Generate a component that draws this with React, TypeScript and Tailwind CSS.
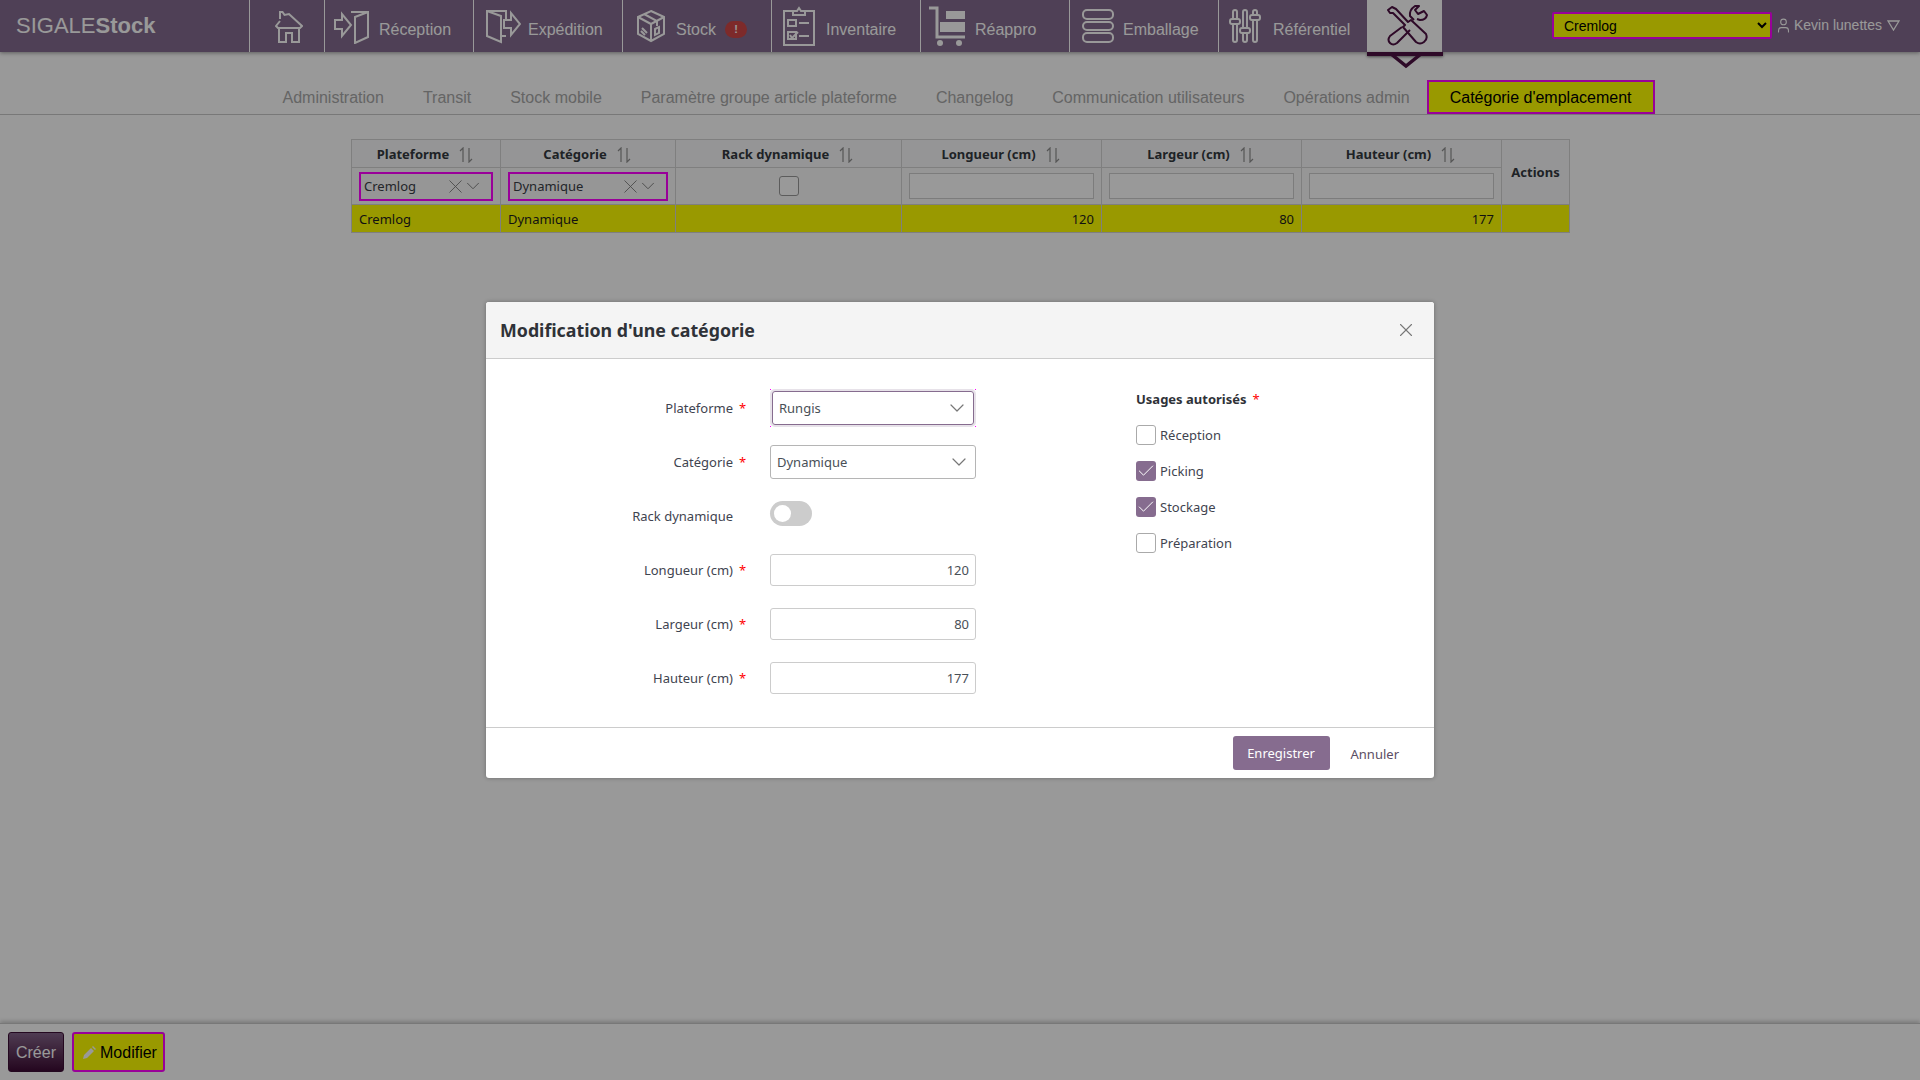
import React from 'react';
import { ChevronDown, X, User, Check } from 'lucide-react';

const uiFont = "[font-family:'Noto_Sans',sans-serif]";

const HomeIcon = () => (
  <svg width="28" height="32" viewBox="0 0 28 32" fill="none" stroke="currentColor" strokeWidth="2">
    <path d="M5 8V1h2.5l2 3L14 3l13 12-2 2H3l-2-2 4-5" />
    <path d="M4 17v14h7V22h6v9h7V17" />
  </svg>
);

const ReceptionIcon = () => (
  <svg width="36" height="36" viewBox="0 0 36 36" fill="none" stroke="currentColor" strokeWidth="2">
    <path d="M1 12h7V6l9 11-9 11v-7H1z" />
    <path d="M17 4h17v25l-13 6V9l13-5" />
  </svg>
);

const ExpeditionIcon = () => (
  <svg width="36" height="36" viewBox="0 0 36 36" fill="none" stroke="currentColor" strokeWidth="2">
    <path d="M21 11V3H2v25l14 6V8L2 3" />
    <path d="M16 28h5" />
    <path d="M19 12h7V5l9 11-9 11v-7h-7z" />
  </svg>
);

const StockIcon = () => (
  <svg width="30" height="34" viewBox="0 0 30 34" fill="none" stroke="currentColor" strokeWidth="2">
    <path d="M15 2l13 6v17l-13 7-13-7V8z" />
    <path d="M2 8l13 7 13-7M15 15v17M8 5l13 7v5" />
    <path d="M6 19l5 5M5 22l4 4" />
    <path d="M19 20l4-2v6l-4 2z" />
  </svg>
);

const InventaireIcon = () => (
  <svg width="32" height="40" viewBox="0 0 32 40" fill="none" stroke="currentColor" strokeWidth="2">
    <path d="M10 5H1v34h30V5h-9" />
    <path d="M10 9V5h4l2-3 2 3h4v4z" />
    <path d="M5 14h8v6H5zM16 17h10M5 26h8v7H5zM16 30h10" />
    <path d="M7 29l2 3 6-6" />
  </svg>
);

const ReapproIcon = () => (
  <svg width="42" height="44" viewBox="0 0 42 44" fill="none">
    <path d="M0 4h8v29h28" stroke="currentColor" strokeWidth="3" />
    <rect x="17" y="7" width="19" height="8" fill="currentColor" />
    <rect x="11" y="18" width="25" height="10" fill="currentColor" />
    <circle cx="11" cy="39" r="3" fill="currentColor" />
    <circle cx="30" cy="39" r="3" fill="currentColor" />
  </svg>
);

const EmballageIcon = () => (
  <svg width="32" height="34" viewBox="0 0 32 34" fill="none" stroke="currentColor" strokeWidth="2">
    <rect x="1" y="1" width="30" height="9" rx="4" />
    <rect x="1" y="13" width="30" height="8" rx="4" />
    <rect x="1" y="24" width="30" height="9" rx="4" />
  </svg>
);

const ReferentielIcon = () => (
  <svg width="32" height="34" viewBox="0 0 32 34" fill="none" stroke="currentColor" strokeWidth="2">
    <path d="M6 1a2 2 0 0 1 2 2v7H4V3a2 2 0 0 1 2-2zM4 15v16a2 2 0 0 0 4 0V15" />
    <rect x="1" y="10" width="10" height="5" rx="2" />
    <path d="M16 1a2 2 0 0 1 2 2v16h-4V3a2 2 0 0 1 2-2zM14 24v7a2 2 0 0 0 4 0v-7" />
    <rect x="11" y="19" width="10" height="5" rx="2" />
    <path d="M26 1a2 2 0 0 1 2 2v3h-4V3a2 2 0 0 1 2-2zM24 11v20a2 2 0 0 0 4 0V11" />
    <rect x="21" y="6" width="10" height="5" rx="2" />
  </svg>
);

const ToolsIcon = () => (
  <svg width="42" height="42" viewBox="0 0 42 42" fill="none" stroke="#4d1143" strokeWidth="2" strokeLinejoin="round">
    <path d="M1 5l4-3 4 2 12 13 3-2 15 14q2 5-2 8-4 3-8 0L16 22l2-2L6 8H3z" />
    <path d="M15 22L3 31q-3 4 0 7 3 3 7 0l13-13" />
    <path d="M27 15l-4-4q-1-6 5-10h4l-4 4 3 4 6-3 3 4q-1 5-7 5l-3-1" />
  </svg>
);

const SortIcon = () => (
  <svg width="14" height="16" viewBox="0 0 14 16" fill="none" stroke="#8f8f8f" strokeWidth="1.2">
    <path d="M4 15V1L1 4M10 1v14l3-3" />
  </svg>
);

type NavItem = { label: string; icon: React.ReactNode; box: string };

const navItems: NavItem[] = [
  { label: 'Réception', icon: <ReceptionIcon />, box: 'pl-[9px] gap-[9px]' },
  { label: 'Expédition', icon: <ExpeditionIcon />, box: 'pl-[11px] gap-[7px]' },
  { label: 'Stock', icon: <StockIcon />, box: 'pl-[13px] gap-[10px]' },
  { label: 'Inventaire', icon: <InventaireIcon />, box: 'pl-[11px] gap-[11px]' },
  { label: 'Réappro', icon: <ReapproIcon />, box: 'pl-[8px] gap-[4px]' },
  { label: 'Emballage', icon: <EmballageIcon />, box: 'pl-[12px] gap-[9px]' },
  { label: 'Référentiel', icon: <ReferentielIcon />, box: 'pl-[10px] gap-[12px]' },
];

const tabs = [
  'Administration',
  'Transit',
  'Stock mobile',
  'Paramètre groupe article plateforme',
  'Changelog',
  'Communication utilisateurs',
  'Opérations admin',
];

const TopBar = () => (
  <header className="relative z-10 flex h-[52px] shrink-0 bg-[#846c8f] text-white shadow-[0_1px_4px_rgba(0,0,0,0.4)]">
    <div className="flex w-[249px] items-center pb-[1px] pl-4 text-[22px] leading-none">
      SIGALE<b>Stock</b>
    </div>
    <a className="flex w-[75px] items-center justify-center border-l border-white pt-[1px] pl-[3px]">
      <HomeIcon />
    </a>
    {navItems.map((item) => (
      <a key={item.label} className={`flex w-[149px] items-center border-l border-white text-base ${item.box}`}>
        {item.icon}
        <span className="pt-[7px]">{item.label}</span>
        {item.label === 'Stock' && (
          <span className="mt-[7px] -ml-[1px] flex h-[17px] w-[22px] items-center justify-center rounded-full bg-[#d04646] text-[11px] font-bold">
            !
          </span>
        )}
      </a>
    ))}
    <a className="relative flex w-[75px] items-center justify-center border-l border-white bg-white pl-[5px]">
      <ToolsIcon />
      <span className="absolute top-[52px] -left-[1px] h-[4px] w-[76px] bg-[#4d1143] shadow-[0_1px_3px_rgba(0,0,0,0.5)]" />
      <svg className="absolute top-[54px] left-[21px]" width="34" height="15" viewBox="0 0 34 15" fill="none" stroke="#4d1143" strokeWidth="3.5">
        <path d="M2 0l15 12L32 0" />
      </svg>
    </a>
    <div className="ml-[110px] flex items-center self-start pt-3">
      <select className="h-[27px] w-[220px] rounded-[2px] border-2 border-[#ff00ff] bg-[#ffff00] pl-[6px] text-sm text-black">
        <option>Cremlog</option>
      </select>
      <User className="ml-[3px]" size={17} strokeWidth={1.5} />
      <span className="ml-[2px] pb-[1px] text-sm">Kevin lunettes</span>
      <svg className="ml-[5px]" width="13" height="11" viewBox="0 0 13 11" fill="none" stroke="currentColor" strokeWidth="1.3">
        <path d="M1 1h11L6.5 10z" />
      </svg>
    </div>
  </header>
);

const Tabs = () => (
  <nav className="flex h-[63px] shrink-0 items-end border-b border-[#c8c8c8] pl-[263px] text-base">
    {tabs.map((tab) => (
      <a key={tab} className="flex h-[34px] items-center border-2 border-transparent px-[17.5px] pt-[1px] text-[#a8a8a8]">
        {tab}
      </a>
    ))}
    <a className="-ml-[2.5px] flex h-[34px] items-center border-2 border-[#ff00ff] bg-[#ffff00] px-[21px] pt-[1px] text-black">
      Catégorie d'emplacement
    </a>
  </nav>
);

const FilterSelect = ({ value, width }: { value: string; width: string }) => (
  <div className={`flex h-[29px] items-center justify-between border-2 border-[#ff00ff] pr-[7px] pl-[3px] text-[13px] text-[#3b4047] ${width}`}>
    <span className="pt-[1px]">{value}</span>
    <span className="flex items-center -space-x-[5px] text-[#7a7a7a]">
      <X size={23} strokeWidth={0.9} />
      <ChevronDown size={22} strokeWidth={1} />
    </span>
  </div>
);

const columns = [
  { label: 'Plateforme', width: 'w-[149px]' },
  { label: 'Catégorie', width: 'w-[175px]' },
  { label: 'Rack dynamique', width: 'w-[226px]' },
  { label: 'Longueur (cm)', width: 'w-[200px]' },
  { label: 'Largeur (cm)', width: 'w-[200px]' },
  { label: 'Hauteur (cm)', width: 'w-[200px]' },
];

const CategoryTable = () => (
  <div className={`mt-[24px] ml-[351px] w-[1218px] text-[13px] text-[#343a40] ${uiFont}`}>
    <table className="w-full table-fixed border-collapse">
      <thead>
        <tr className="h-[28px] bg-[#f8f9fa]">
          {columns.map((col) => (
            <th key={col.label} className={`border border-[#d4d4d4] p-0 pt-[2px] pr-[2px] font-bold ${col.width}`}>
              <span className="inline-flex items-center gap-[10px]">
                {col.label}
                <SortIcon />
              </span>
            </th>
          ))}
          <th rowSpan={2} className="w-[68px] border border-[#d4d4d4] bg-[#f8f9fa] p-0 pt-[1px] font-bold">
            Actions
          </th>
        </tr>
        <tr className="h-[37px] bg-[#fafafa]">
          <td className="border border-[#d4d4d4] px-[7px]">
            <FilterSelect value="Cremlog" width="w-[134px]" />
          </td>
          <td className="border border-[#d4d4d4] px-[7px]">
            <FilterSelect value="Dynamique" width="w-[160px]" />
          </td>
          <td className="border border-[#d4d4d4]">
            <div className="mx-auto h-5 w-5 rounded-[3px] border border-[#9a9a9a] bg-white" />
          </td>
          {[0, 1, 2].map((i) => (
            <td key={i} className="border border-[#d4d4d4] px-[7px]">
              <div className="h-[26px] w-full border border-[#cfcfcf] bg-white" />
            </td>
          ))}
        </tr>
      </thead>
      <tbody>
        <tr className="h-[28px] bg-[#ffff00] text-[#1d1d1d]">
          <td className="border border-[#d4d4d4] px-[7px] pt-[2px] pb-0">Cremlog</td>
          <td className="border border-[#d4d4d4] px-[7px] pt-[2px] pb-0">Dynamique</td>
          <td className="border border-[#d4d4d4]" />
          <td className="border border-[#d4d4d4] px-[7px] pt-[2px] pb-0 text-right">120</td>
          <td className="border border-[#d4d4d4] px-[7px] pt-[2px] pb-0 text-right">80</td>
          <td className="border border-[#d4d4d4] px-[7px] pt-[2px] pb-0 text-right">177</td>
          <td className="border border-[#d4d4d4]" />
        </tr>
      </tbody>
    </table>
  </div>
);

const BottomBar = () => (
  <footer className="mt-auto flex h-[57px] shrink-0 items-center gap-2 border-t border-[#c8c8c8] pl-2 shadow-[0_-2px_4px_rgba(0,0,0,0.2)]">
    <button className="h-10 w-[56px] rounded-[3px] border border-[#3d0e36] bg-gradient-to-b from-[#84648a] to-[#3d0a35] pt-[1px] text-base text-white">
      Créer
    </button>
    <button className="flex h-10 w-[93px] items-center gap-[4px] rounded-[3px] border-2 border-[#ff00ff] bg-[#ffff00] pt-[1px] pl-[9px] text-base text-black">
      <svg width="13" height="13" viewBox="0 0 13 13" fill="#fff">
        <path d="M0 13l1-4 7-7 3 3-7 7zM9 1l1-1 3 3-1 1z" />
      </svg>
      Modifier
    </button>
  </footer>
);

const FormRow = ({ label, required, children }: { label: string; required?: boolean; children: React.ReactNode }) => (
  <div className="flex h-[34px] items-center">
    <div className="w-[247px] pt-[1px] text-right">
      <label className="relative inline-block">
        {label}
        {required && <span className="absolute top-0 left-[calc(100%+6px)] text-[#ff0000]">*</span>}
      </label>
    </div>
    <div className="ml-[37px] flex w-[206px] items-center">{children}</div>
  </div>
);

const NumberInput = ({ value }: { value: string }) => (
  <div className="flex h-8 w-full items-center justify-end rounded-[3px] border border-[#cccccc] pt-[1px] pr-[6px] text-[#495057]">{value}</div>
);

const usages = [
  { label: 'Réception', checked: false },
  { label: 'Picking', checked: true },
  { label: 'Stockage', checked: true },
  { label: 'Préparation', checked: false },
];

const Modal = () => (
  <div className="absolute inset-0 z-20 bg-black/40">
    <div className={`mx-auto mt-[302px] w-[948px] rounded-[3px] bg-white text-[13px] text-[#3f4450] shadow-[0_0_4px_rgba(0,0,0,0.3)] ${uiFont}`}>
      <div className="flex h-[57px] items-center justify-between rounded-t-[3px] border-b border-[#cccccc] bg-[#f4f4f4] pr-[17px] pl-[14px]">
        <h2 className="text-[17.8px] font-bold text-[#2f3238]">Modification d'une catégorie</h2>
        <X size={22} strokeWidth={1.2} className="text-[#777777]" />
      </div>
      <div className="flex h-[368px]">
        <div className="flex flex-col gap-5 pt-[32px]">
          <FormRow label="Plateforme" required>
            <div className="relative mx-[2px] flex h-[34px] w-[202px] items-center justify-between rounded-[3px] border border-[#866c8f] pr-[4px] pl-[6px] text-[#495057] shadow-[0_0_0_2px_#e7e2e9]">
              <span className="pt-[1px]">Rungis</span>
              <ChevronDown size={24} strokeWidth={1.2} className="text-[#777777]" />
              <span className="absolute -top-[3px] -left-[3px] h-px w-px bg-[#ff00ff]" />
              <span className="absolute -top-[3px] -right-[3px] h-px w-px bg-[#ff00ff]" />
              <span className="absolute -bottom-[3px] -left-[3px] h-px w-px bg-[#ff00ff]" />
              <span className="absolute -right-[3px] -bottom-[3px] h-px w-px bg-[#ff00ff]" />
            </div>
          </FormRow>
          <FormRow label="Catégorie" required>
            <div className="flex h-[34px] w-full items-center justify-between rounded-[3px] border border-[#b5b5b5] pr-[4px] pl-[6px] text-[#495057]">
              <span className="pt-[1px]">Dynamique</span>
              <ChevronDown size={24} strokeWidth={1.2} className="text-[#777777]" />
            </div>
          </FormRow>
          <FormRow label="Rack dynamique">
            <div className="-mt-[5px] flex h-[25px] w-[42px] items-center rounded-full bg-[#cccccc] pl-[4px]">
              <span className="h-[17px] w-[17px] rounded-full bg-white" />
            </div>
          </FormRow>
          <FormRow label="Longueur (cm)" required>
            <NumberInput value="120" />
          </FormRow>
          <FormRow label="Largeur (cm)" required>
            <NumberInput value="80" />
          </FormRow>
          <FormRow label="Hauteur (cm)" required>
            <NumberInput value="177" />
          </FormRow>
        </div>
        <div className="ml-[160px] pt-[31px]">
          <div className="relative inline-block font-bold text-[#2f3238]">
            Usages autorisés
            <span className="absolute top-0 left-[calc(100%+6px)] font-normal text-[#ff0000]">*</span>
          </div>
          <div className="mt-[15px] flex flex-col gap-4">
            {usages.map((usage) => (
              <div key={usage.label} className="flex h-5 items-center gap-[4px]">
                {usage.checked ? (
                  <span className="flex h-5 w-5 items-center justify-center rounded-[3px] bg-[#866c8f] text-white">
                    <Check size={20} strokeWidth={1.2} />
                  </span>
                ) : (
                  <span className="h-5 w-5 rounded-[3px] border border-[#aaaaaa]" />
                )}
                <span className="pt-[2px]">{usage.label}</span>
              </div>
            ))}
          </div>
        </div>
      </div>
      <div className="flex h-[51px] items-center justify-end border-t border-[#cccccc] pr-[35px]">
        <button className="h-[34px] w-[97px] rounded-[3px] bg-[#866c8f] pt-[1px] text-white">Enregistrer</button>
        <button className="ml-[21px] pt-[3px] text-[#5b4d64]">Annuler</button>
      </div>
    </div>
  </div>
);

const App = () => (
  <div className="relative flex h-screen flex-col overflow-hidden bg-white font-['Liberation_Sans',Arial,sans-serif]">
    <TopBar />
    <Tabs />
    <CategoryTable />
    <BottomBar />
    <Modal />
  </div>
);

export default App;
